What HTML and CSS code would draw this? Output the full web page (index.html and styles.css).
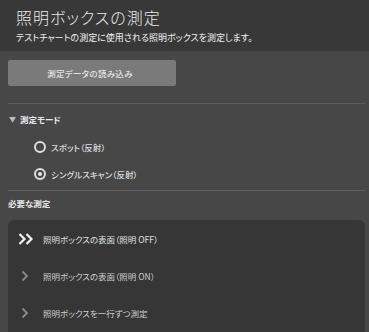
FILE: index.html
```html
<!DOCTYPE html>
<html lang="ja">
<head>
<meta charset="utf-8">
<link rel="stylesheet" href="styles.css">
</head>
<body>
<div class="header">
  <div class="title">照明ボックスの測定</div>
  <div class="subtitle">テストチャートの測定に使用される照明ボックスを測定します。</div>
</div>
<div class="content">
  <div class="btn">測定データの読み込み</div>
  <div class="sep first"></div>
  <div class="heading"><span class="tri">▼</span>測定モード</div>
  <div class="radio-row r1"><span class="radio"></span>スポット（反射）</div>
  <div class="radio-row r2"><span class="radio checked"></span>シングルスキャン（反射）</div>
  <div class="sep"></div>
  <div class="heading h2">必要な測定</div>
  <div class="panel">
    <div class="item active">
      <svg class="chev" width="16" height="12" viewBox="0 0 16 12"><path d="M1.5 1 L6.5 6 L1.5 11 M8.5 1 L13.5 6 L8.5 11" fill="none" stroke="#f2f2f2" stroke-width="2.2"/></svg>
      <span>照明ボックスの表面（照明 OFF）</span>
    </div>
    <div class="item">
      <svg class="chev" width="16" height="12" viewBox="0 0 16 12"><path d="M4.5 1.5 L9 6 L4.5 10.5" fill="none" stroke="#8a8a8a" stroke-width="1.8"/></svg>
      <span>照明ボックスの表面（照明 ON）</span>
    </div>
    <div class="item">
      <svg class="chev" width="16" height="12" viewBox="0 0 16 12"><path d="M4.5 1.5 L9 6 L4.5 10.5" fill="none" stroke="#8a8a8a" stroke-width="1.8"/></svg>
      <span>照明ボックスを一行ずつ測定</span>
    </div>
  </div>
</div>
</body>
</html>
```
FILE: styles.css
```css
html, body {
  margin: 0;
  padding: 0;
}
body {
  width: 369px;
  height: 332px;
  overflow: hidden;
  background: #474747;
  font-family: "Noto Sans CJK JP", "Noto Sans", sans-serif;
  color: #e6e6e6;
  font-feature-settings: "palt";
}
.header {
  height: 51px;
  box-sizing: border-box;
  background: #383838;
  padding: 7px 0 0 16px;
}
.title {
  font-size: 16px;
  font-weight: 300;
  line-height: 20px;
  color: #ececec;
  letter-spacing: 1px;
}
.subtitle {
  font-size: 9px;
  line-height: 13px;
  margin-top: 4px;
  color: #f0f0f0;
}
.content {
  padding: 9px 4px 0 8px;
}
.btn {
  width: 168px;
  height: 26px;
  background: #7a7a7a;
  border-radius: 2px;
  display: flex;
  align-items: center;
  justify-content: center;
  font-size: 8.5px;
  font-weight: 500;
  color: #e4e4e4;
  letter-spacing: 0.3px;
  padding-right: 4px;
  box-sizing: border-box;
}
.sep {
  height: 1px;
  background: #5e5e5e;
}
.sep.first {
  margin-top: 17px;
}
.heading {
  height: 30px;
  display: flex;
  align-items: center;
  font-size: 8.5px;
  font-weight: 700;
  color: #e8e8e8;
  padding-left: 1px;
}
.heading.h2 {
  height: 24px;
  padding-left: 0;
}
.tri {
  font-size: 7px;
  color: #bdbdbd;
  margin-right: 4px;
}
.radio-row {
  display: flex;
  align-items: center;
  padding-left: 26px;
  font-size: 8.5px;
  color: #dcdcdc;
  font-weight: 500;
}
.radio-row.r1 {
  height: 26px;
}
.radio-row.r2 {
  height: 28px;
  margin-bottom: 2px;
}
.radio {
  width: 12px;
  height: 12px;
  box-sizing: border-box;
  border: 2px solid #dedede;
  border-radius: 50%;
  margin-right: 5px;
  display: flex;
  align-items: center;
  justify-content: center;
}
.radio.checked::after {
  content: "";
  width: 4px;
  height: 4px;
  border-radius: 50%;
  background: #e6e6e6;
}
.panel {
  margin-top: 5px;
  background: #363636;
  border-radius: 6px 6px 0 0;
  height: 120px;
}
.item {
  height: 37px;
  display: flex;
  align-items: center;
  padding-left: 10px;
  font-size: 8.5px;
  color: #cfcfcf;
}
.item .chev {
  margin-right: 9px;
  flex: none;
}
.item.active span {
  color: #e0e0e0;
}
```
